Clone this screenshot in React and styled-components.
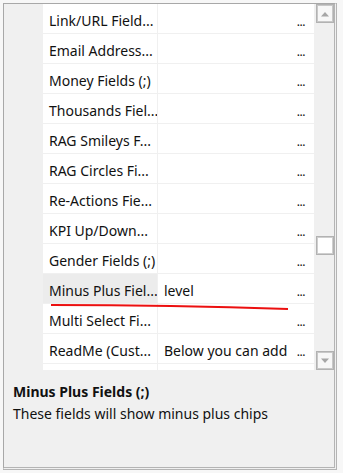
import React from "react";
import styled, { createGlobalStyle } from "styled-components";

const GlobalStyle = createGlobalStyle`
  html, body {
    margin: 0;
    padding: 0;
    background: #f7f7f7;
  }
  body {
    font-family: "Noto Sans", "Open Sans", sans-serif;
  }
`;

const Frame = styled.div`
  position: relative;
  box-sizing: border-box;
  margin: 3px 0 0 3px;
  width: 334px;
  height: 467px;
  display: flex;
  flex-direction: column;
  background: #f0f0f0;
  border-left: 1px solid #a8a8a8;
  border-top: 1px solid #a8a8a8;
  border-right: 3px double #b4b4b4;
  border-bottom: 3px double #b4b4b4;
`;

const GridArea = styled.div`
  display: flex;
  height: 366px;
  flex-shrink: 0;
`;

const Viewport = styled.div`
  flex: 1;
  overflow: hidden;
`;

const Row = styled.div`
  display: grid;
  grid-template-columns: 39px 115px 1fr;
  height: 30px;
`;

const Gutter = styled.div`
  background: #f0f0f0;
`;

const NameCell = styled.div`
  box-sizing: border-box;
  display: flex;
  align-items: center;
  padding: 3px 0 0 6px;
  background: ${p => (p.$selected ? "#ececec" : "#ffffff")};
  border-right: 1px solid #f0f0f0;
  border-bottom: 1px solid #f0f0f0;
  font-size: 14px;
  color: #111;
  white-space: nowrap;
  overflow: hidden;
`;

const ValueCell = styled.div`
  box-sizing: border-box;
  display: flex;
  align-items: center;
  justify-content: space-between;
  padding: 3px 9px 0 6px;
  background: #ffffff;
  border-bottom: 1px solid #f0f0f0;
  font-size: 14px;
  color: #111;
  white-space: nowrap;
  overflow: hidden;
`;

const Dots = styled.span`
  font-size: 12px;
  letter-spacing: -0.5px;
  align-self: flex-end;
  margin-bottom: 5px;
  line-height: 1;
`;

const ScrollBar = styled.div`
  width: 20px;
  display: flex;
  flex-direction: column;
  align-items: center;
  padding-left: 1px;
  box-sizing: border-box;
  background: #f0f0f0;
`;

const ScrollButton = styled.div`
  box-sizing: border-box;
  width: 18px;
  height: 19px;
  border: 1px solid #b2b2b2;
  box-shadow: inset 0 0 0 1px #c8c8c8;
  background: #f7f7f7;
  display: flex;
  align-items: center;
  justify-content: center;
`;

const Track = styled.div`
  flex: 1;
  display: flex;
  flex-direction: column;
  align-items: center;
`;

const Thumb = styled.div`
  box-sizing: border-box;
  width: 18px;
  height: 19px;
  margin-top: ${p => p.$offset}px;
  border: 1px solid #b2b2b2;
  box-shadow: inset 0 0 0 1px #cfcfcf;
  background: #ffffff;
`;

const Description = styled.div`
  flex: 1;
  padding: 11px 10px 0 9px;
  background: #f0f0f0;
  color: #111;
  font-size: 14px;
`;

const DescTitle = styled.div`
  font-weight: 700;
  line-height: 22px;
`;

const DescText = styled.div`
  line-height: 21px;
`;

const Mark = styled.svg`
  position: absolute;
  left: 46px;
  top: 295px;
  pointer-events: none;
`;

const Arrow = ({ down }) => (
  <svg width="10" height="6" viewBox="0 0 10 6">
    <path d={down ? "M1 0.5h8L5 5z" : "M1 5.5h8L5 1z"} fill="#a6a6a6" />
  </svg>
);

const rows = [
  { name: "Link/URL Field..." },
  { name: "Email Address..." },
  { name: "Money Fields (;)" },
  { name: "Thousands Fiel..." },
  { name: "RAG Smileys F..." },
  { name: "RAG Circles Fi..." },
  { name: "Re-Actions Fie..." },
  { name: "KPI Up/Down..." },
  { name: "Gender Fields (;)" },
  { name: "Minus Plus Fiel...", value: "level", selected: true },
  { name: "Multi Select Fi..." },
  { name: "ReadMe (Cust...", value: "Below you can add" },
  { name: "", blank: true },
];

export default function App() {
  return (
    <>
      <GlobalStyle />
      <Frame>
        <GridArea>
          <Viewport>
            {rows.map((r, i) => (
              <Row key={i}>
                <Gutter />
                <NameCell $selected={r.selected}>{r.name}</NameCell>
                <ValueCell>
                  <span>{r.value || ""}</span>
                  {!r.blank && <Dots>...</Dots>}
                </ValueCell>
              </Row>
            ))}
          </Viewport>
          <ScrollBar>
            <ScrollButton>
              <Arrow />
            </ScrollButton>
            <Track>
              <Thumb $offset={213} />
            </Track>
            <ScrollButton>
              <Arrow down />
            </ScrollButton>
          </ScrollBar>
        </GridArea>
        <Description>
          <DescTitle>Minus Plus Fields (;)</DescTitle>
          <DescText>These fields will show minus plus chips</DescText>
        </Description>
        <Mark width="245" height="14" viewBox="0 0 245 14">
          <path d="M1 6 C 80 6, 180 8, 238 10" stroke="#ec1010" strokeWidth="2" fill="none" />
        </Mark>
      </Frame>
    </>
  );
}
